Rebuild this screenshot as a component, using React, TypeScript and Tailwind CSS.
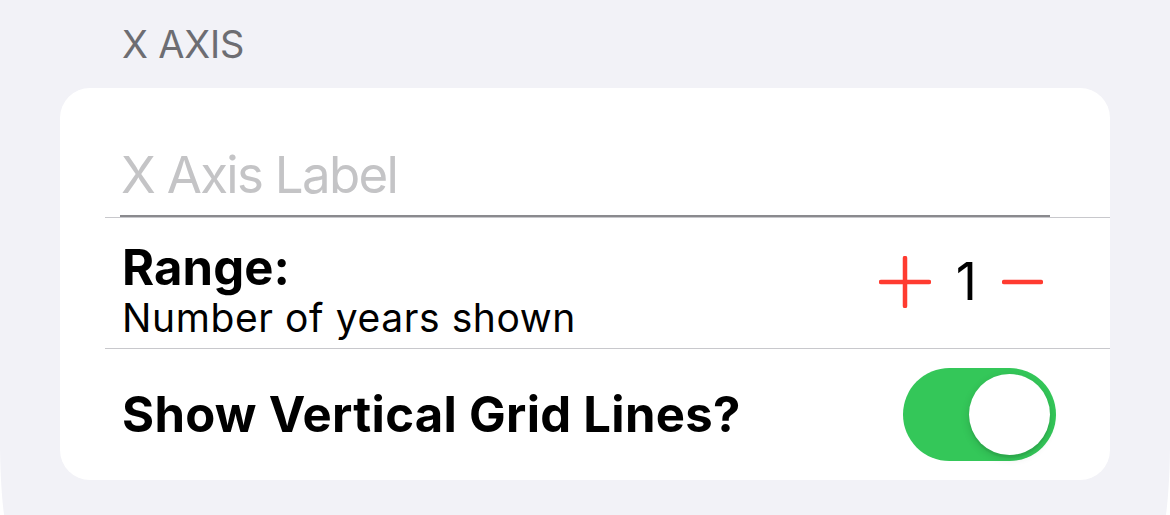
import { useState } from "react";

const font = { fontFamily: "Inter, 'Noto Sans', sans-serif" };

const Toggle = ({ on, onChange }: { on: boolean; onChange: (v: boolean) => void }) => (
    <button
        onClick={() => onChange(!on)}
        className={`relative w-[153px] h-[93px] rounded-full ${on ? "bg-[#34c759]" : "bg-[#e9e9eb]"}`}>
        <span
            className={`absolute top-[6px] w-[81px] h-[81px] rounded-full bg-white shadow-[0_3px_8px_rgba(0,0,0,0.15),0_3px_1px_rgba(0,0,0,0.06)] ${on ? "left-[66px]" : "left-[6px]"}`} />
    </button>
);

const App = () => {
    const [years, setYears] = useState(1);
    const [gridLines, setGridLines] = useState(true);
    const [label, setLabel] = useState("");

    return (
        <div className="w-[1170px] h-[515px] overflow-hidden bg-white" style={font}>
            <div className="h-[540px] bg-[#f2f2f7] [border-bottom-left-radius:12px_100px] [border-bottom-right-radius:12px_100px]">
                <div className="pt-[21px] pl-[122px] text-[38px] leading-[46px] text-[#6d6d72] tracking-[-0.2px]">X AXIS</div>
                <div className="mt-[21px] ml-[60px] w-[1050px] rounded-[30px] bg-white">
                    {/* label input */}
                    <div className="ml-[45px] h-[130px] flex items-end border-b border-[#c8c8cc]">
                        <input
                            value={label}
                            onChange={(e) => setLabel(e.currentTarget.value)}
                            placeholder="X Axis Label"
                            className="ml-[15px] w-[930px] h-[72px] pb-[10px] pl-[1px] border-b-2 border-[#8a8a8e] text-[51px] tracking-[-1.7px] text-black placeholder:text-[#c4c4c6] outline-none bg-transparent"
                        />
                    </div>

                    {/* range stepper */}
                    <div className="ml-[45px] h-[131px] flex justify-between border-b border-[#c8c8cc]">
                        <div className="pl-[17px] pt-[24px]">
                            <div className="text-[49px] leading-[52px] font-bold tracking-[0.1px] text-black">Range:</div>
                            <div className="mt-[2px] text-[39px] leading-[44px] tracking-[0.6px] text-black">Number of years shown</div>
                        </div>
                        <div className="flex items-center pr-[67px] pb-[2px]">
                            <button onClick={() => setYears(years + 1)} className="w-[52px] h-[52px] flex items-center justify-center">
                                <svg width="52" height="52" viewBox="0 0 52 52">
                                    <path d="M2 26H50M26 2V50" stroke="#ff3b30" strokeWidth="4.5" strokeLinecap="round" />
                                </svg>
                            </button>
                            <span className="mx-[25px] text-[52px] leading-[60px] text-black">{years}</span>
                            <button onClick={() => setYears(Math.max(1, years - 1))} className="w-[41px] h-[52px] flex items-center justify-center">
                                <svg width="41" height="6" viewBox="0 0 41 6">
                                    <path d="M2 3H39" stroke="#ff3b30" strokeWidth="4.5" strokeLinecap="round" />
                                </svg>
                            </button>
                        </div>
                    </div>

                    {/* grid lines */}
                    <div className="h-[131px] pl-[62px] pr-[54px] flex items-center justify-between">
                        <span className="text-[49px] font-bold tracking-[0.3px] text-black">Show Vertical Grid Lines?</span>
                        <Toggle on={gridLines} onChange={setGridLines} />
                    </div>
                </div>
            </div>
        </div>
    );
};

export default App;
